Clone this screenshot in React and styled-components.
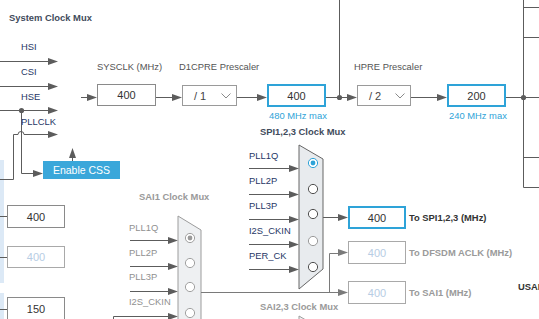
import React from 'react'
import styled, { createGlobalStyle, css } from 'styled-components'

const GlobalStyle = createGlobalStyle`
  html, body { margin: 0; padding: 0; background: #ffffff; }
  body { font-family: "Liberation Sans", Arial, sans-serif; }
`

const WIRE = '#5c5c5c'
const BLUE = '#2ea3d8'

const Canvas = styled.div`
  position: relative;
  width: 539px;
  height: 319px;
  overflow: hidden;
  background: #fff;
`

const Wires = styled.svg`
  position: absolute;
  left: 0;
  top: 0;
`

const SideStrip = styled.div`
  position: absolute;
  left: 0;
  top: ${p => p.$top}px;
  width: 4px;
  height: ${p => p.$height}px;
  background: #dce9f6;
`

const tones = {
  title: css`color: #3f4b5b; font-weight: 700;`,
  caption: css`color: #545454;`,
  input: css`color: #1f3766;`,
  inputOff: css`color: #909090;`,
  hint: css`color: ${BLUE};`,
  output: css`color: #333; font-weight: 700;`,
  off: css`color: #9a9a9a; font-weight: 700;`,
}

// free-standing diagram label, placed by its centre line
const Tag = styled.span`
  position: absolute;
  left: ${p => p.$x}px;
  top: ${p => p.$y - 6}px;
  line-height: 12px;
  font-size: 9.4px;
  white-space: nowrap;
  ${p => tones[p.$tone || 'caption']}
`

// text that sits inside a flow container
const Caption = styled.span`
  display: block;
  height: 12px;
  line-height: 12px;
  font-size: 9.4px;
  white-space: nowrap;
  margin-left: ${p => p.$indent || 0}px;
  ${p => tones[p.$tone || 'caption']}
`

const ValueBox = styled.div`
  width: ${p => p.$w || 59}px;
  height: ${p => p.$h || 23}px;
  flex: none;
  box-sizing: border-box;
  display: flex;
  align-items: center;
  justify-content: center;
  font-size: 11px;
  background: #fff;
  ${p => p.$variant === 'active' && css`
    border: 2px solid ${BLUE};
    color: #333;
  `}
  ${p => p.$variant === 'plain' && css`
    border: 1px solid #8a8a8a;
    color: #333;
  `}
  ${p => p.$variant === 'off' && css`
    border: 1px solid #a9a9a9;
    color: #b7cde4;
  `}
`

const Dropdown = styled.div`
  margin-top: 1px;
  height: 21px;
  box-sizing: border-box;
  border: 1px solid #9a9a9a;
  background: #fff;
  display: flex;
  align-items: center;
  justify-content: space-between;
  padding: 0 5px 0 11px;
  font-size: 11px;
  color: #444;
`

const Chevron = () => (
  <svg width="10" height="6" viewBox="0 0 10 6">
    <polyline points="0.5,0.5 5,5 9.5,0.5" fill="none" stroke="#8a8a8a" strokeWidth="1" />
  </svg>
)

const ClockChain = styled.div`
  position: absolute;
  left: 97px;
  top: 61px;
  display: flex;
  align-items: flex-start;
`

const Stage = styled.div`
  display: flex;
  flex-direction: column;
  gap: 11px;
  width: ${p => p.$w}px;
  margin-left: ${p => p.$ml || 0}px;
  & > ${Caption}:last-child:not(:first-child) {
    margin-top: -8px;
    margin-left: 2px;
  }
`

const InputList = styled.div`
  position: absolute;
  left: ${p => p.$x}px;
  top: ${p => p.$top}px;
  display: flex;
  flex-direction: column;
  gap: ${p => p.$gap}px;
`

const BoxColumn = styled.div`
  position: absolute;
  left: ${p => p.$x}px;
  top: ${p => p.$top}px;
  display: flex;
  flex-direction: column;
`

const OutputRow = styled.div`
  display: flex;
  align-items: center;
  gap: 3px;
  margin-top: ${p => p.$mt || 0}px;
`

const Spaced = styled.div`
  margin-top: ${p => p.$mt || 0}px;
`

const EnableButton = styled.div`
  position: absolute;
  left: 43px;
  top: 161px;
  width: 77px;
  height: 18px;
  background: #3aa7da;
  color: #fff;
  font-size: 10.5px;
  display: flex;
  align-items: center;
  justify-content: center;
`

const Arrow = ({ x1, x2, y, color = WIRE }) => (
  <g>
    <line x1={x1} y1={y} x2={x2 - 8} y2={y} stroke={color} strokeWidth="1" />
    <polygon points={`${x2 - 10},${y - 3.5} ${x2},${y} ${x2 - 10},${y + 3.5}`} fill={color} />
  </g>
)

const Dot = ({ x, y }) => <circle cx={x} cy={y} r="2.6" fill={WIRE} />

const Mux = ({ points, cx, rows, selected, off, dimmed = [] }) => (
  <g>
    <polygon points={points} fill={off ? '#eef0f2' : '#e8ebee'} stroke={off ? '#9c9c9c' : '#666'} strokeWidth="1" />
    {rows.map((cy, i) => {
      const on = i === selected
      const ring = off ? '#a0a0a0' : on ? BLUE : dimmed.includes(i) ? '#9a9a9a' : '#4f4f4f'
      return (
        <g key={cy}>
          <circle cx={cx} cy={cy} r="4.6" fill="#fff" stroke={ring} strokeWidth="1" />
          {on && <circle cx={cx} cy={cy} r="2.4" fill={off ? '#9a9a9a' : BLUE} />}
        </g>
      )
    })}
  </g>
)

function Diagram() {
  return (
    <Wires width="539" height="319" viewBox="0 0 539 319">
      {/* system clock mux inputs */}
      <Arrow x1={0} x2={58} y={61.5} />
      <Arrow x1={0} x2={58} y={86.5} />
      <Arrow x1={0} x2={58} y={110.5} />
      <path d="M0 179.5 H13.5 V134.5 H18 A3 3 0 0 1 24 134.5 H50" fill="none" stroke={WIRE} />
      <polygon points="48,131 58,134.5 48,138" fill={WIRE} />
      <path d="M21.5 110.5 V173.5 H35" fill="none" stroke={WIRE} />
      <polygon points="33,170 43,173.5 33,177" fill={WIRE} />
      <Dot x={21.5} y={110.5} />
      <line x1="72.5" y1="161" x2="72.5" y2="155" stroke={WIRE} />
      <polygon points="69,158 72.5,148 76,158" fill={WIRE} />

      {/* system clock path */}
      <Arrow x1={81} x2={97} y={97.5} />
      <Arrow x1={156} x2={182} y={97.5} />
      <Arrow x1={237} x2={267} y={97.5} />
      <line x1="326" y1="97.5" x2="339.5" y2="97.5" stroke={WIRE} />
      <line x1="339.5" y1="0" x2="339.5" y2="97.5" stroke={WIRE} />
      <Dot x={339.5} y={97.5} />
      <Arrow x1={339.5} x2={357} y={97.5} />
      <Arrow x1={411} x2={447} y={97.5} />
      <line x1="506" y1="97.5" x2="539" y2="97.5" stroke={WIRE} />
      <line x1="523.5" y1="0" x2="523.5" y2="187.5" stroke={WIRE} />
      {[7.5, 37.5, 157.5, 187.5].map(y => (
        <line key={y} x1="523.5" y1={y} x2="539" y2={y} stroke={WIRE} />
      ))}
      <Dot x={523.5} y={97.5} />

      {/* left column feeds */}
      {[216.5, 257.5, 309.5].map(y => (
        <line key={y} x1="0" y1={y} x2="7" y2={y} stroke={WIRE} />
      ))}

      {/* SPI mux */}
      {[168.5, 194.5, 219.5, 244.5, 269.5].map(y => (
        <Arrow key={y} x1={249} x2={299} y={y} />
      ))}
      <Arrow x1={323} x2={348} y={217.5} />
      <Mux points="299,145 323,159 323,269 299,289" cx={313} rows={[163, 189, 214, 241, 267]} selected={0} dimmed={[3]} />

      {/* SAI1 mux */}
      {[240.5, 266.5, 291.5].map(y => (
        <Arrow key={y} x1={130} x2={178} y={y} />
      ))}
      <path d="M113.5 330 V316.5 H170" fill="none" stroke={WIRE} />
      <polygon points="168,313 178,316.5 168,320" fill={WIRE} />
      <Mux points="178,216 201,230 201,345 178,365" cx={190} rows={[238, 263, 287, 313]} selected={0} off />
      <path d="M201 292.5 H340 M329.5 292.5 V253.5 H340" fill="none" stroke="#7a7a7a" />
      <polygon points="338,249 348,252.5 338,256" fill="#7a7a7a" />
      <polygon points="338,289 348,292.5 338,296" fill="#7a7a7a" />

      {/* SAI2,3 mux top */}
      <Mux points="299,316 323,330 323,400 299,420" cx={313} rows={[]} off />
    </Wires>
  )
}

const systemInputs = ['HSI', 'CSI', 'HSE', 'PLLCLK']
const spiInputs = ['PLL1Q', 'PLL2P', 'PLL3P', 'I2S_CKIN', 'PER_CK']
const sai1Inputs = ['PLL1Q', 'PLL2P', 'PLL3P', 'I2S_CKIN']

export default function App() {
  return (
    <>
      <GlobalStyle />
      <Canvas>
        <SideStrip $top={160} $height={123} />
        <SideStrip $top={293} $height={26} />
        <Diagram />

        <Tag $x={9} $y={18} $tone="title">System Clock Mux</Tag>
        <InputList $x={21} $top={41} $gap={13}>
          {systemInputs.map(n => <Caption key={n} $tone="input">{n}</Caption>)}
        </InputList>
        <EnableButton>Enable CSS</EnableButton>

        <ClockChain>
          <Stage $w={59}>
            <Caption>SYSCLK (MHz)</Caption>
            <ValueBox $h={22} $variant="plain">400</ValueBox>
          </Stage>
          <Stage $w={55} $ml={26}>
            <Caption $indent={-3}>D1CPRE Prescaler</Caption>
            <Dropdown>/ 1<Chevron /></Dropdown>
          </Stage>
          <Stage $w={59} $ml={30}>
            <Caption />
            <ValueBox $variant="active">400</ValueBox>
            <Caption $tone="hint">480 MHz max</Caption>
          </Stage>
          <Stage $w={54} $ml={31}>
            <Caption $indent={-3}>HPRE Prescaler</Caption>
            <Dropdown>/ 2<Chevron /></Dropdown>
          </Stage>
          <Stage $w={59} $ml={36}>
            <Caption />
            <ValueBox $variant="active">200</ValueBox>
            <Caption $tone="hint">240 MHz max</Caption>
          </Stage>
        </ClockChain>

        <BoxColumn $x={7} $top={205}>
          <ValueBox $w={58} $variant="plain">400</ValueBox>
          <Spaced $mt={18}><ValueBox $w={58} $h={22} $variant="off">400</ValueBox></Spaced>
          <Spaced $mt={29}><ValueBox $w={58} $variant="plain">150</ValueBox></Spaced>
        </BoxColumn>

        <Tag $x={260} $y={132} $tone="title">SPI1,2,3 Clock Mux</Tag>
        <InputList $x={249} $top={150} $gap={13}>
          {spiInputs.map(n => <Caption key={n} $tone="input">{n}</Caption>)}
        </InputList>

        <Tag $x={139} $y={197} $tone="off">SAI1 Clock Mux</Tag>
        <InputList $x={129} $top={222} $gap={12.6}>
          {sai1Inputs.map(n => <Caption key={n} $tone="inputOff">{n}</Caption>)}
        </InputList>

        <BoxColumn $x={348} $top={206}>
          <OutputRow>
            <ValueBox $w={58} $variant="active">400</ValueBox>
            <Caption $tone="output">To SPI1,2,3 (MHz)</Caption>
          </OutputRow>
          <OutputRow $mt={12}>
            <ValueBox $w={58} $variant="off">400</ValueBox>
            <Caption $tone="off">To DFSDM ACLK (MHz)</Caption>
          </OutputRow>
          <OutputRow $mt={17}>
            <ValueBox $w={58} $variant="off">400</ValueBox>
            <Caption $tone="off">To SAI1 (MHz)</Caption>
          </OutputRow>
        </BoxColumn>
        <Tag $x={518} $y={287} $tone="output">USART1 Clock Mux</Tag>

        <Tag $x={260} $y={307} $tone="off">SAI2,3 Clock Mux</Tag>
      </Canvas>
    </>
  )
}
